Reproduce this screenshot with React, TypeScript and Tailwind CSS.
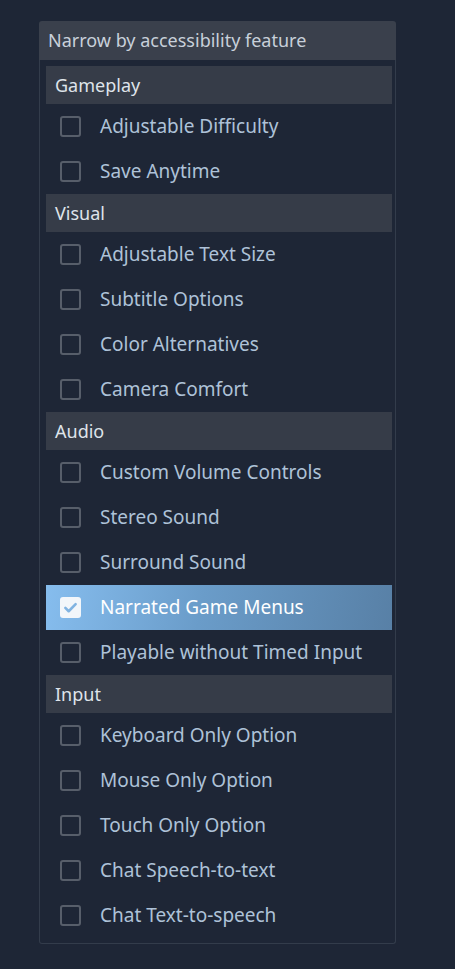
const sections: { title: string; items: string[] }[] = [
  { title: 'Gameplay', items: ['Adjustable Difficulty', 'Save Anytime'] },
  {
    title: 'Visual',
    items: ['Adjustable Text Size', 'Subtitle Options', 'Color Alternatives', 'Camera Comfort'],
  },
  {
    title: 'Audio',
    items: [
      'Custom Volume Controls',
      'Stereo Sound',
      'Surround Sound',
      'Narrated Game Menus',
      'Playable without Timed Input',
    ],
  },
  {
    title: 'Input',
    items: [
      'Keyboard Only Option',
      'Mouse Only Option',
      'Touch Only Option',
      'Chat Speech-to-text',
      'Chat Text-to-speech',
    ],
  },
]

const checked = ['Narrated Game Menus']

function Checkbox({ on }: { on: boolean }) {
  if (on) {
    return (
      <div className="w-[21px] h-[21px] rounded-[3px] bg-[#f2f6fa] flex items-center justify-center shrink-0">
        <svg width="15" height="15" viewBox="0 0 14 14" fill="none">
          <path d="M2.2 7.4l3.1 3.1L11.8 3.8" stroke="#80b3e1" strokeWidth="2.4" strokeLinecap="round" strokeLinejoin="round" />
        </svg>
      </div>
    )
  }
  return <div className="w-[21px] h-[21px] rounded-[3px] border-2 border-[#575e6a] shrink-0" />
}

export default function App() {
  return (
    <div className="min-h-screen bg-[#1e2636] pt-[21px] pl-[39px] font-['Noto_Sans',sans-serif]">
      <div className="w-[357px]">
        <div className="h-[39px] bg-[#3a404c] rounded-t-[3px] flex items-center pl-[9px] text-[18px] text-[#c8d0da]">
          Narrow by accessibility feature
        </div>
        <div className="border border-t-0 border-[#333c4b] rounded-b-[3px] pt-[6px] pb-[5px] pl-[6px] pr-[3px]">
          {sections.map((s) => (
            <div key={s.title}>
              <div className="h-[38px] bg-[#363c48] flex items-center pl-[9px] text-[18px] text-[#dfe4ea]">
                {s.title}
              </div>
              {s.items.map((item) => {
                const on = checked.includes(item)
                return (
                  <div
                    key={item}
                    className={
                      on
                        ? 'h-[45px] flex items-center pl-[14px] gap-[19px] bg-[linear-gradient(100deg,#86bdee_0%,#6a9cc9_45%,#5880a6_100%)] text-white text-[19px]'
                        : 'h-[45px] flex items-center pl-[14px] gap-[19px] text-[#aec2d8] text-[19px]'
                    }
                  >
                    <Checkbox on={on} />
                    <span>{item}</span>
                  </div>
                )
              })}
            </div>
          ))}
        </div>
      </div>
    </div>
  )
}
